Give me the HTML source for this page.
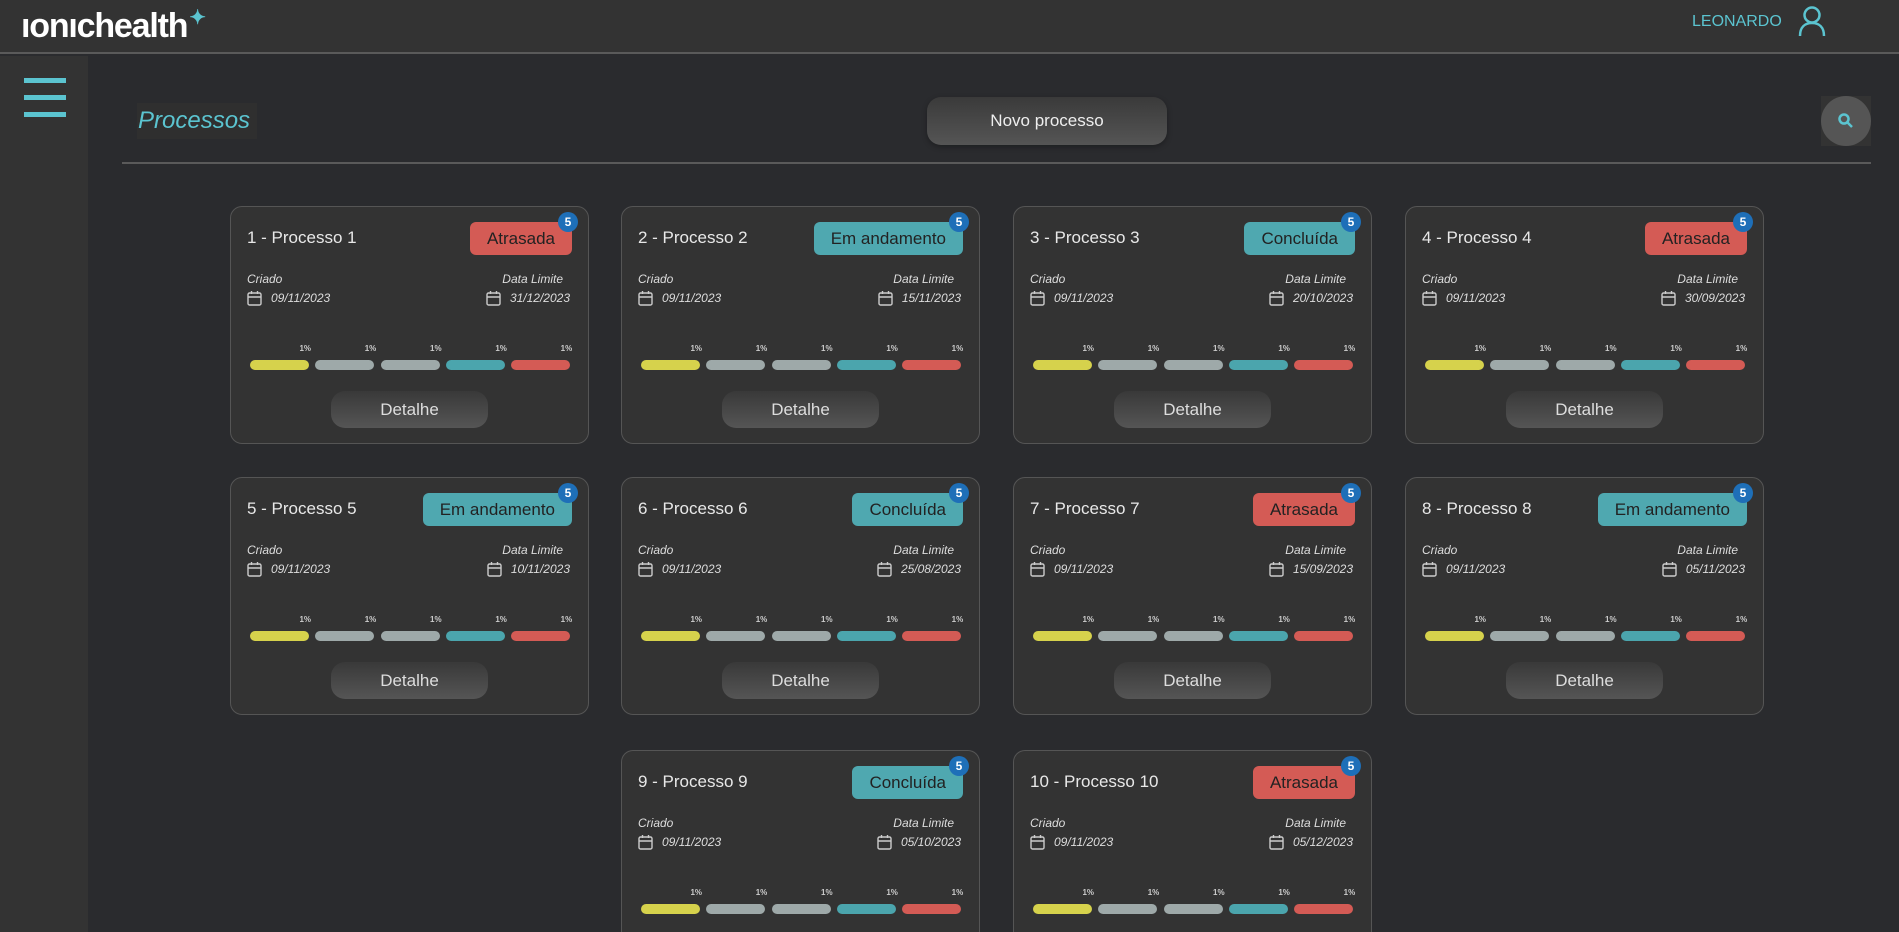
<!DOCTYPE html>
<html style="width:1899px;height:932px;overflow:hidden"><head><meta charset="utf-8"><style>
*{box-sizing:border-box;margin:0;padding:0}
body{width:1899px;height:932px;overflow:hidden;background:#2a2b2e;font-family:"Liberation Sans",sans-serif;position:relative;color:#e6e6e6}
#wrap{position:absolute;left:0;top:0;width:1899px;height:932px;overflow:hidden}
.hdr{position:absolute;left:0;top:0;width:1899px;height:54px;background:#333;border-bottom:2px solid #5a5a5a}
.side{position:absolute;left:0;top:56px;width:88px;height:876px;background:#333}
.ham{position:absolute;left:24px;width:42px;height:5px;background:#5bc4d0}
.logo{position:absolute;left:21px;top:7px;font-size:34px;font-weight:bold;color:#fff;letter-spacing:-1.2px}
.card{position:absolute;width:359px;height:238px;background:#333;border:1px solid #555;border-radius:12px;overflow:hidden}
.t{position:absolute;left:16px;top:21px;font-size:17px;color:#e8e8e8}
.b{position:absolute;right:16px;top:15px;height:33px;padding:0 17px;line-height:33px;border-radius:6px;font-size:17px;color:#222}
.n{position:absolute;right:10px;top:5px;width:20px;height:20px;border-radius:50%;background:#1e6fb8;color:#fff;font-size:12px;font-weight:bold;text-align:center;line-height:20px}
.lab{position:absolute;top:65px;font-size:12px;font-style:italic;color:#ddd}
.dt{position:absolute;top:83px;font-size:12px;font-style:italic;color:#ddd;display:flex;align-items:center;gap:9px}
.bar{position:absolute;top:153px;height:10px;width:59px;border-radius:5px}
.pc{position:absolute;top:137px;font-size:8px;font-weight:bold;color:#ccc;width:20px;text-align:right}
.det{position:absolute;left:100px;top:184px;width:157px;height:37px;border-radius:14px;background:linear-gradient(#393939,#555);text-align:center;line-height:37px;font-size:17px;color:#ddd}
</style></head><body><div id="wrap">
<div class="hdr"></div>
<div class="logo">ıonıchealth<span style="color:#5bc4d0;font-size:20px;position:relative;top:-13px;left:2px">✦</span></div>
<div style="position:absolute;left:1692px;top:13px;font-size:16px;color:#5bc4d0">LEONARDO</div>
<svg style="position:absolute;left:1798px;top:5px" width="28" height="32" viewBox="0 0 28 32" fill="none" stroke="#5bc4d0" stroke-width="2.5"><circle cx="14" cy="10" r="7.5"/><path d="M2 31 C2 22 7 18 14 18 C21 18 26 22 26 31"/></svg>
<div class="side"></div>
<div class="ham" style="top:78px"></div><div class="ham" style="top:95px"></div><div class="ham" style="top:112px"></div>
<div style="position:absolute;left:137px;top:103px;width:120px;height:36px;background:#2f2f2f"></div>
<div style="position:absolute;left:138px;top:107px;font-size:24px;font-style:italic;color:#5bc4d0">Processos</div>
<div style="position:absolute;left:927px;top:97px;width:240px;height:48px;border-radius:14px;background:linear-gradient(#3a3a3a,#555);text-align:center;line-height:48px;font-size:17px;color:#eee;box-shadow:0 2px 6px rgba(0,0,0,.3)">Novo processo</div>
<div style="position:absolute;left:1821px;top:96px;width:50px;height:50px;background:#333"></div>
<div style="position:absolute;left:1821px;top:96px;width:50px;height:50px;border-radius:50%;background:#555"></div>
<svg style="position:absolute;left:1836px;top:111px" width="20" height="20" viewBox="0 0 20 20" fill="none" stroke="#5bc4d0" stroke-width="2.5"><circle cx="8" cy="8" r="4.5"/><path d="M11 11 L16 16"/></svg>
<div style="position:absolute;left:122px;top:162px;width:1749px;height:2px;background:#5a5a5a"></div>
<div id="c"></div>
</div>
<script>
const d=[["1 - Processo 1","Atrasada","31/12/2023"],["2 - Processo 2","Em andamento","15/11/2023"],["3 - Processo 3","Concluída","20/10/2023"],["4 - Processo 4","Atrasada","30/09/2023"],["5 - Processo 5","Em andamento","10/11/2023"],["6 - Processo 6","Concluída","25/08/2023"],["7 - Processo 7","Atrasada","15/09/2023"],["8 - Processo 8","Em andamento","05/11/2023"],["9 - Processo 9","Concluída","05/10/2023"],["10 - Processo 10","Atrasada","05/12/2023"]];
const pos=[[230,206],[621,206],[1013,206],[1405,206],[230,477],[621,477],[1013,477],[1405,477],[621,750],[1013,750]];
const cal='<svg width="15" height="16" viewBox="0 0 15 16" fill="none" stroke="#ccc" stroke-width="1.4"><rect x="1" y="3" width="13" height="12" rx="1.5"/><path d="M1 7H14M4.5 1V4M10.5 1V4"/></svg>';
const cols=["#d6d24c","#9ea9a9","#9ea9a9","#4ba5ad","#d45b55"];
let h="";
d.forEach((c,i)=>{const [x,y]=pos[i];const bc=c[1]=="Atrasada"?"#d45b55":"#4fa8b0";
const ex=i>=8?"height:182px;border-bottom:none;border-radius:12px 12px 0 0;":"";
let bars="";cols.forEach((cl,j)=>{const bx=19+j*65.3;bars+=`<div class="bar" style="left:${bx}px;background:${cl}"></div><div class="pc" style="left:${bx+41}px">1%</div>`});
h+=`<div class="card" style="left:${x}px;top:${y}px;${ex}"><div class="t">${c[0]}</div><div class="b" style="background:${bc}">${c[1]}</div><div class="n">5</div>
<div class="lab" style="left:16px">Criado</div><div class="dt" style="left:16px">${cal}09/11/2023</div>
<div class="lab" style="right:25px">Data Limite</div><div class="dt" style="right:18px">${cal}${c[2]}</div>${bars}${i>=8?"":'<div class="det">Detalhe</div>'}</div>`});
document.getElementById("c").innerHTML=h;
</script>
</body></html>
